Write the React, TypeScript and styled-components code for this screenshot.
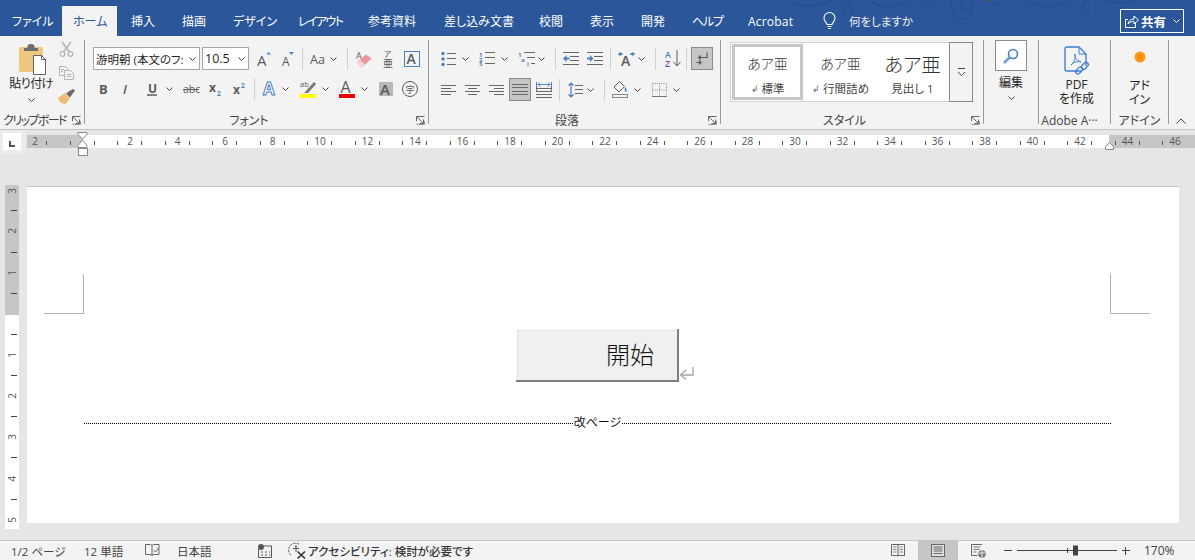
import React from "react";
import styled, { createGlobalStyle } from "styled-components";

const FONT = `"Open Sans", "Noto Sans CJK JP", sans-serif`;

const Global = createGlobalStyle`
  html, body { margin: 0; padding: 0; background: #e6e6e6; }
  #root { width: 1195px; height: 560px; overflow: hidden; }
  * { box-sizing: border-box; }
  svg { display: block; flex: none; overflow: visible; }
  svg text { font-family: ${FONT}; }
`;

const Shell = styled.div`
  width: 1195px; height: 560px; display: flex; flex-direction: column;
  font-family: ${FONT}; font-feature-settings: "palt"; color: #444; overflow: hidden;
`;

/* ---------- title bar ---------- */
const TitleBar = styled.header`
  position: relative; height: 36px; flex: none; background: #2b579a;
  display: flex; align-items: flex-end; color: #fff; font-size: 12px;
`;
const Swirl = styled.svg`position: absolute; top: 0; left: 760px;`;
const Tab = styled.div<{ $w: number; $pl?: number; $ls?: number; $active?: boolean }>`
  position: relative; width: ${p => p.$w}px; height: 30px; padding-left: ${p => p.$pl ?? 14}px;
  display: flex; align-items: center; white-space: nowrap; letter-spacing: ${p => p.$ls ?? 0}px;
  background: ${p => (p.$active ? "#f3f3f3" : "transparent")};
  color: ${p => (p.$active ? "#2b579a" : "#fff")};
`;
const TellMe = styled.div`
  position: relative; height: 30px; margin-left: 14px; display: flex; align-items: center; gap: 13px;
  font-size: 11.5px; color: #f0f0f0; white-space: nowrap;
`;
const ShareButton = styled.div`
  position: relative; margin: 0 11px 3px auto; width: 64px; height: 24px; border: 1px solid #fff;
  display: flex; align-items: center; padding-left: 4px; gap: 2px; font-weight: 700; font-size: 12.5px;
`;

/* ---------- ribbon ---------- */
const Ribbon = styled.section`
  height: 94px; flex: none; display: flex; background: #f3f3f3; border-bottom: 1px solid #c6c6c6;
`;
const Group = styled.div<{ $w: number }>`
  width: ${p => p.$w}px; height: 93px; display: flex; flex-direction: column; flex: none;
`;
const GroupBody = styled.div<{ $pt?: number; $col?: boolean }>`
  height: 75px; padding-top: ${p => p.$pt ?? 0}px; display: flex;
  flex-direction: ${p => (p.$col ? "column" : "row")};
`;
const GroupFooter = styled.div`height: 18px; display: flex; align-items: center;`;
const GroupLabel = styled.div<{ $pad?: number; $ls?: number }>`
  flex: 1; text-align: center; font-size: 12px; white-space: nowrap;
  padding-right: ${p => p.$pad ?? 0}px; letter-spacing: ${p => p.$ls ?? 0}px;
`;
const Launcher = styled.svg`margin: 0 3px 0 3px;`;
const Divider = styled.div`width: 1px; flex: none; margin: 4px 0 5px; background: #9a9a9a;`;
const Row = styled.div<{ $mt?: number }>`
  display: flex; align-items: center; height: 23px; margin-top: ${p => p.$mt ?? 0}px;
`;
const Cell = styled.div<{ $ml?: number }>`
  margin-left: ${p => p.$ml ?? 0}px; display: flex; align-items: center; justify-content: center; flex: none;
`;
const Sep = styled.div<{ $ml: number }>`
  width: 1px; height: 22px; flex: none; background: #d0d0d0; margin-left: ${p => p.$ml}px;
`;
const Toggle = styled.div<{ $ml: number }>`
  width: 22px; height: 23px; margin-left: ${p => p.$ml}px; flex: none; background: #c6c6c6;
  border: 1px solid #8a8a8a; display: flex; align-items: center; justify-content: center;
`;
const Select = styled.div<{ $ml: number; $w: number; $size: number }>`
  width: ${p => p.$w}px; height: 23px; margin-left: ${p => p.$ml}px; background: #fff;
  border: 1px solid #a6a6a6; display: flex; align-items: center; padding: 0 3px 0 2px;
  font-size: ${p => p.$size}px; color: #262626; flex: none; white-space: nowrap; justify-content: space-between;
  font-feature-settings: "normal";
`;
const PasteCol = styled.div`
  width: 55px; display: flex; flex-direction: column; align-items: center; padding: 8px 0 0 11px;
  font-size: 12px; color: #262626; white-space: nowrap;
`;
const PasteLabel = styled.div`margin: 0 0 0 -4px; line-height: 18px; letter-spacing: -.6px;`;
const PasteChevron = styled.div`margin: 5px 0 0 -3px;`;
const SmallCol = styled.div`
  width: 24px; display: flex; flex-direction: column; align-items: center; margin-left: -1px; padding-top: 6px; gap: 9px;
`;
const Gallery = styled.div`
  margin: 6px 0 0 9px; display: flex; height: 60px;
`;
const GalleryBox = styled.div`
  width: 219px; height: 60px; background: #fff; border: 1px solid #d0d0d0; border-right: 0;
  padding: 1px; display: flex; gap: 5px;
`;
const StyleItem = styled.div<{ $w: number; $sel?: boolean }>`
  width: ${p => p.$w}px; height: 56px; flex: none; display: flex; flex-direction: column; align-items: center;
  border: 3px solid ${p => (p.$sel ? "#c6c6c6" : "transparent")};
  background: #fff;
`;
const StylePreview = styled.div<{ $size: number }>`
  height: 33px; display: flex; align-items: center; font-size: ${p => p.$size}px; font-weight: 300;
  color: #333; font-feature-settings: "normal"; white-space: nowrap;
`;
const StyleName = styled.div`
  font-size: 11.5px; line-height: 16px; margin-top: 2px; white-space: nowrap; color: #444;
  display: flex; align-items: center; gap: 3px;
`;
const ParaGlyph = styled.span`font-size: 9px; color: #666;`;
const MoreBox = styled.div`
  width: 24px; height: 60px; border: 1px solid #8a8a8a; display: flex; align-items: center; justify-content: center;
`;
const LargeCol = styled.div<{ $pl?: number }>`
  flex: 1; display: flex; flex-direction: column; align-items: center; padding-left: ${p => p.$pl ?? 0}px;
  font-size: 12px; line-height: 14px; color: #262626;
`;
const SearchBox = styled.div`
  width: 32px; height: 31px; margin-top: 4px; background: #fff; border: 1px solid #8a8a8a;
  display: flex; align-items: center; justify-content: center;
`;
const LargeLabel = styled.div<{ $mt: number }>`margin-top: ${p => p.$mt}px; white-space: nowrap; text-align: center;`;
const ChevronWrap = styled.div<{ $mt: number }>`margin-top: ${p => p.$mt}px;`;
const Collapse = styled.div`
  flex: 1; display: flex; align-items: flex-end; justify-content: flex-end; padding: 0 9px 5px 0; height: 93px;
`;

/* ---------- workspace ---------- */
const Workspace = styled.main`
  flex: 1; background: #e6e6e6; display: flex; flex-direction: column; min-height: 0;
`;
const RulerBar = styled.div`height: 56px; flex: none; display: flex;`;
const TabSelector = styled.div`
  width: 26px; height: 24px; background: #ebebeb; padding: 3px 5px 4px 3px; margin-right: 1px;
`;
const TabBox = styled.div`
  width: 18px; height: 17px; background: #fff; padding: 8px 0 0 6px;
`;
const TabGlyph = styled.div`
  width: 6px; height: 6px; border-left: 2px solid #555; border-bottom: 2px solid #555;
`;
const CanvasRow = styled.div`flex: 1; display: flex; min-height: 0;`;
const VRulerWrap = styled.div`margin: -1px 8px 0 5px; width: 14px;`;
const Page = styled.div`
  width: 1152px; height: 337px; background: #fff; border-top: 1px solid #c6c6c6;
  display: flex; flex-direction: column;
`;
const CropRow = styled.div`
  margin-top: 87px; height: 40px; display: flex; justify-content: space-between; padding: 0 29px 0 17px;
`;
const CropMark = styled.div<{ $right?: boolean }>`
  width: 40px; height: 40px; border-bottom: 1px solid #b0b0b0;
  ${p => (p.$right ? "border-left: 1px solid #b0b0b0;" : "border-right: 1px solid #b0b0b0;")}
`;
const FieldRow = styled.div`
  margin: 15px 0 0 489px; display: flex; align-items: flex-end;
`;
const FieldOuter = styled.div`
  width: 163px; height: 53px; padding: 1px 0 0 1px;
  border-right: 2px solid #7f7f7f; border-bottom: 2px solid #7f7f7f;
`;
const FieldFace = styled.div`
  width: 100%; height: 100%; background: #f0f0f0; border-top: 1px solid #e0e0e0; border-left: 1px solid #e0e0e0;
  display: flex; align-items: center; justify-content: flex-end; padding: 0 23px 4px 0;
  font-size: 24px; color: #111; font-weight: 300; font-feature-settings: "normal";
`;
const ReturnMark = styled.div`margin: 0 0 2px 0;`;
const BreakRow = styled.div`
  margin: 34px 0 0 57px; width: 1027px; height: 14px; display: flex; align-items: center;
`;
const BreakLine = styled.div`flex: 1; border-top: 1px dotted #000;`;
const BreakLabel = styled.div`padding: 0 1px; font-size: 12px; color: #111; white-space: nowrap; line-height: 14px;`;

/* ---------- status bar ---------- */
const StatusBar = styled.footer`
  height: 20px; flex: none; background: #f3f3f3; border-top: 1px solid #c6c6c6;
  display: flex; align-items: stretch; font-size: 11.5px; color: #444;
`;
const StatusCell = styled.div<{ $w: number; $pl?: number; $bold?: boolean }>`
  width: ${p => p.$w}px; padding-left: ${p => p.$pl ?? 0}px; display: flex; align-items: center; flex: none;
  white-space: nowrap; font-weight: ${p => (p.$bold ? 500 : 400)}; color: ${p => (p.$bold ? "#333" : "#444")};
`;
const StatusRight = styled.div`margin-left: auto; display: flex; align-items: center; padding-right: 18px;`;
const ViewButton = styled.div<{ $active?: boolean }>`
  width: 40px; height: 19px; display: flex; align-items: center; justify-content: center;
  background: ${p => (p.$active ? "#c6c6c6" : "transparent")};
`;
const ZoomText = styled.div`margin-left: 14px; font-size: 12px; width: 33px;`;

/* ---------- icons ---------- */
type IcP = { w: number; h: number; children?: React.ReactNode };
const Ic = ({ w, h, children }: IcP) => (
  <svg width={w} height={h} viewBox={`0 0 ${w} ${h}`} fill="none">{children}</svg>
);
const G = "#5b5b5b";
const B = "#4a80bd";

const Chev = () => <Ic w={7} h={4}><path d="M.5.5l3 3 3-3" stroke="#444" /></Ic>;

const Paste = () => (
  <Ic w={28} h={31}>
    <rect x="0" y="3" width="24" height="25" rx="1.5" fill="#f0c77e" />
    <path d="M5 7V4h3.5V2.5a3.5 2.5 0 0 1 7 0V4H19v3z" fill="#6d6d6d" />
    <path d="M14.5 11.5h8l4 4v15h-12z" fill="#fff" stroke="#666" />
    <path d="M22.5 11.5v4h4" stroke="#666" />
  </Ic>
);
const Scissors = () => (
  <Ic w={15} h={15}>
    <path d="M3 0l7.5 10M12 0L4.5 10" stroke="#b5b5b5" strokeWidth="1.6" />
    <circle cx="3.5" cy="12" r="2.4" stroke="#b5b5b5" strokeWidth="1.2" />
    <circle cx="11.5" cy="12" r="2.4" stroke="#b5b5b5" strokeWidth="1.2" />
  </Ic>
);
const Copy = () => (
  <Ic w={15} h={14}>
    <path d="M.5.5h6l2 2v7h-8z" fill="#f3f3f3" stroke="#b5b5b5" />
    <path d="M5.5 4.5h6l3 3v6h-9z" fill="#f3f3f3" stroke="#b5b5b5" />
    <path d="M7.5 8.5h5M7.5 10.5h5M2 3.5h3M2 5.5h2" stroke="#b5b5b5" />
  </Ic>
);
const Painter = () => (
  <Ic w={17} h={15}>
    <path d="M0 9l7-5 5 5.500-4.500 5.500C4 15 1.500 13 0 9z" fill="#ecbd72" />
    <path d="M8 4.500l5-3.500 2.500 2.500L12 8.500z" fill="#6a6a6a" />
    <circle cx="15" cy="1.800" r="1.700" fill="#6a6a6a" />
  </Ic>
);
const AGrow = () => (
  <Ic w={14} h={16}>
    <text x="0" y="15" fontSize="15" fill={G}>A</text>
    <path d="M9.500 3.500L11.500 1l2.500 2.500z" fill={B} />
  </Ic>
);
const AShrink = () => (
  <Ic w={12} h={14}>
    <text x="0" y="13.500" fontSize="12" fill={G}>A</text>
    <path d="M7 0h5L9.500 3z" fill={B} />
  </Ic>
);
const CaseIcon = () => <Ic w={16} h={13}><text x="0" y="11.500" fontSize="12.500" fill={G}>Aa</text></Ic>;
const Eraser = () => (
  <Ic w={16} h={16}>
    <text x="0" y="8" fontSize="9" fill={G}>A</text>
    <path d="M1 11l9-7.500 5.500 4-8.500 8H4z" fill="#f0949c" />
    <path d="M1 11l3 4.500H7l2-2L4.500 9z" fill="#f8d2d5" />
  </Ic>
);
const Furigana = () => (
  <Ic w={12} h={17}>
    <text x="1" y="6.500" fontSize="7.500" fill={G}>ア</text>
    <text x="0" y="16.500" fontSize="10" fill={G}>亜</text>
  </Ic>
);
const ABox = () => (
  <Ic w={16} h={16}>
    <rect x=".5" y=".5" width="15" height="15" stroke="#4a80bd" />
    <text x="2.500" y="13" fontSize="14" fontWeight="600" fill={G}>A</text>
  </Ic>
);
const Letter = ({ c, w, style, weight }: { c: string; w: number; style?: string; weight?: number }) => (
  <Ic w={w} h={14}>
    <text x="1" y="12" fontSize="13" fontStyle={style} fontWeight={weight ?? 700} fill={G}>{c}</text>
  </Ic>
);
const Under = () => (
  <Ic w={11} h={15}>
    <text x="1" y="11.500" fontSize="12" fontWeight="700" fill={G}>U</text>
    <path d="M0 14h10" stroke={G} strokeWidth="1.500" />
  </Ic>
);
const Strike = () => (
  <Ic w={16} h={12}>
    <text x="0" y="10" fontSize="10.500" fill={G}>abc</text>
    <path d="M0 6.500h16" stroke={G} />
  </Ic>
);
const Sub = () => (
  <Ic w={13} h={14}>
    <text x="0" y="10" fontSize="12" fontWeight="700" fill={G}>x</text>
    <text x="8" y="13.500" fontSize="6.500" fontWeight="700" fill={B}>2</text>
  </Ic>
);
const Sup = () => (
  <Ic w={13} h={14}>
    <text x="0" y="12" fontSize="12" fontWeight="700" fill={G}>x</text>
    <text x="8" y="6" fontSize="6.500" fontWeight="700" fill={B}>2</text>
  </Ic>
);
const Glow = () => (
  <Ic w={15} h={16}>
    <text x="0" y="14" fontSize="17" fontWeight="700" fill="#fff" stroke="#4a80bd" strokeWidth="1">A</text>
  </Ic>
);
const Highlight = () => (
  <Ic w={16} h={18}>
    <text x="0" y="7" fontSize="7.500" fill={G}>ab</text>
    <path d="M5 12L14 2l2 2-8 9H4z" fill="#777" />
    <rect y="14" width="16" height="4" fill="#ffff00" />
  </Ic>
);
const ARed = () => (
  <Ic w={16} h={18}>
    <text x="1.500" y="12.500" fontSize="16" fill={G}>A</text>
    <rect y="14" width="16" height="4" fill="#e80000" />
  </Ic>
);
const AGray = () => (
  <Ic w={14} h={14}>
    <rect width="14" height="14" fill="#b8b8b8" />
    <text x="1" y="12.500" fontSize="15" fontWeight="600" fill={G}>A</text>
  </Ic>
);
const Enclosed = () => (
  <Ic w={16} h={16}>
    <circle cx="8" cy="8" r="7.500" stroke={G} />
    <text x="3.500" y="12" fontSize="9" fill={G}>字</text>
  </Ic>
);
const Lines = ({ x1, x2, ys }: { x1: number[] | number; x2: number[] | number; ys: number[] }) => (
  <>
    {ys.map((y, i) => (
      <path key={y} d={`M${Array.isArray(x1) ? x1[i] : x1} ${y + .5}H${Array.isArray(x2) ? x2[i] : x2}`} stroke="#666" />
    ))}
  </>
);
const Bullets = () => (
  <Ic w={15} h={14}>
    {[1.500, 7, 12.500].map(y => <circle key={y} cx="2" cy={y} r="1.700" fill={B} />)}
    <Lines x1={6} x2={15} ys={[1, 6, 12]} />
  </Ic>
);
const Numbers = () => (
  <Ic w={16} h={15}>
    {[5.500, 10.500, 15].map((y, i) => <text key={y} x="0" y={y} fontSize="6" fontWeight="700" fill={B}>{i + 1}</text>)}
    <Lines x1={6} x2={16} ys={[1, 6, 12]} />
  </Ic>
);
const Multi = () => (
  <Ic w={17} h={15}>
    <text x="0" y="5.500" fontSize="6" fontWeight="700" fill={B}>1</text>
    <text x="3" y="10.500" fontSize="6" fontWeight="700" fill={B}>a</text>
    <text x="9" y="15" fontSize="6" fontWeight="700" fill={B}>i</text>
    <Lines x1={[6, 9, 13]} x2={17} ys={[1, 6, 12]} />
  </Ic>
);
const Indent = ({ inc }: { inc?: boolean }) => (
  <Ic w={16} h={13}>
    <Lines x1={[0, 7, 7, 0]} x2={16} ys={[0, 4, 8, 12]} />
    {inc
      ? <path d="M0 5.500h3V3l3.500 3.500L3 10V7.500H0z" fill={B} />
      : <path d="M6.500 5.500h-3V3L0 6.500 3.500 10V7.500h3z" fill={B} />}
  </Ic>
);
const Phonetic = () => (
  <Ic w={17} h={15}>
    <text x="3" y="15" fontSize="14" fontWeight="600" fill={G}>A</text>
    <path d="M0 3l2.500-2.500v1.500h2v2h-2v1.500zM17 3L14.500.500v1.500h-2v2h2v1.500z" fill={B} />
  </Ic>
);
const Sort = () => (
  <Ic w={16} h={17}>
    <text x="0" y="7.500" fontSize="9" fontWeight="600" fill={B}>A</text>
    <text x="0" y="16.500" fontSize="9" fontWeight="600" fill="#7c4ca0">Z</text>
    <path d="M12 0v15M8.500 12l3.500 4 3.500-4" stroke={G} />
  </Ic>
);
const ParaMark = () => (
  <Ic w={12} h={14}>
    <path d="M11 .5v5H2.500M5 3.500l-2.500 2 2.500 2" stroke={G} strokeWidth="1.200" />
    <path d="M.5 10.500h4M3 8.500l2 2-2 2" stroke={G} strokeWidth="1.200" />
  </Ic>
);
const Align = ({ kind }: { kind: "l" | "c" | "r" }) => {
  const s = kind === "l" ? [0, 0, 0, 0] : kind === "c" ? [0, 3, 0, 3] : [0, 5, 0, 5];
  const e = kind === "l" ? [15, 10, 15, 10] : kind === "c" ? [15, 12, 15, 12] : [15, 15, 15, 15];
  return <Ic w={15} h={10}><Lines x1={s} x2={e} ys={[0, 3, 6, 9]} /></Ic>;
};
const Justify = () => <Ic w={16} h={11}><Lines x1={0} x2={16} ys={[0, 3, 7, 10]} /></Ic>;
const Distribute = () => (
  <Ic w={16} h={16}>
    <path d="M.5 0v10M15.500 0v10M2 2.500h12" stroke={B} />
    <path d="M4 .5L2 2.500l2 2M12 .5l2 2-2 2" stroke={B} />
    <Lines x1={0} x2={16} ys={[6, 9, 12, 15]} />
  </Ic>
);
const LineSpacing = () => (
  <Ic w={15} h={16}>
    <path d="M3 1v14M.5 3.500L3 1l2.500 2.500M.5 12.500L3 15l2.500-2.500" stroke={B} strokeWidth="1.200" />
    <Lines x1={7} x2={15} ys={[3, 7, 11]} />
  </Ic>
);
const Fill = () => (
  <Ic w={16} h={17}>
    <path d="M7.500.5L2 6l5 5 5.500-5.500z" fill="#f3f3f3" stroke={G} />
    <path d="M13 6c1.500 2 2.500 3.500 1.500 4.500S12 10 13 6z" fill={B} />
    <rect x=".5" y="13.500" width="15" height="3" fill="#f3f3f3" stroke="#888" />
  </Ic>
);
const Borders = () => (
  <Ic w={15} h={14}>
    <path d="M.5.500h14v13M.5.500v13M7.500.500v13M.5 7h14" stroke="#8c8c8c" strokeDasharray="1 1.200" />
    <path d="M0 13.500h15" stroke="#777" />
  </Ic>
);
const Gallery3 = () => (
  <Ic w={9} h={8}>
    <path d="M1 .5h7" stroke="#444" />
    <path d="M1 4l3.500 3.500L8 4" stroke="#444" />
  </Ic>
);
const Search = () => (
  <Ic w={16} h={16}>
    <circle cx="10" cy="6" r="4.500" fill="#fff" stroke={B} strokeWidth="1.600" />
    <path d="M6.500 9.500L1 15" stroke="#6f9bcf" strokeWidth="2.500" />
  </Ic>
);
const Pdf = () => (
  <Ic w={26} h={30}>
    <path d="M1 3a2 2 0 0 1 2-2h12l7 7v12M17 25H3a2 2 0 0 1-2-2V3" stroke="#3f7fd6" strokeWidth="1.400" />
    <path d="M15 1v7h7" stroke="#3f7fd6" />
    <path d="M7 19c3-2 5-7 4-11-1 3 2 7 6 8-4-1-7 0-10 3z" stroke="#3f7fd6" />
    <rect x="11.500" y="22.500" width="8" height="4.500" rx="2.200" transform="rotate(-45 15 25)" stroke="#3f7fd6" strokeWidth="1.300" />
    <rect x="17" y="17.500" width="8" height="4.500" rx="2.200" transform="rotate(-45 21 20)" stroke="#3f7fd6" strokeWidth="1.300" />
  </Ic>
);
const Dot = () => (
  <Ic w={12} h={12}>
    <circle cx="6" cy="6" r="5.500" fill="#ff9b1a" />
    <circle cx="6" cy="6" r="3" fill="#ff8a00" />
  </Ic>
);
const Bulb = () => (
  <Ic w={13} h={18}>
    <path d="M4 12.500C3.500 10.500 1 9.500 1 6a5.500 5.500 0 0 1 11 0c0 3.500-2.500 4.500-3 6.500z" stroke="#fff" strokeWidth="1.100" />
    <path d="M4.500 14.500h4M5 16.500h3" stroke="#fff" strokeWidth="1.100" />
  </Ic>
);
const Share = () => (
  <Ic w={14} h={14}>
    <path d="M3 5.500H.5v8h10V9" stroke="#fff" />
    <path d="M3 10c.5-3 3-5 6-5V2l4.500 4L9 10V7.500C7 7.500 4.500 8 3 10z" stroke="#fff" />
  </Ic>
);
const WhiteChev = () => <Ic w={7} h={4}><path d="M.5.500l3 3 3-3" stroke="#fff" /></Ic>;
const UpChev = () => <Ic w={10} h={6}><path d="M.5 5.500L5 1l4.500 4.500" stroke="#444" /></Ic>;
const LauncherIcon = () => (
  <Launcher width="9" height="9" viewBox="0 0 9 9" fill="none">
    <path d="M.5 5V.5H8.500M1 1l6 6M3.500 7.500h4v-4" stroke="#666" />
    <path d="M.5 8.500H8.500V5" stroke="#999" />
  </Launcher>
);
const ReturnIcon = () => (
  <Ic w={15} h={13}>
    <path d="M14 0v8H2M7 3L1.500 8 7 12.500" stroke="#a5a5a5" strokeWidth="1.300" />
  </Ic>
);
const BookCheck = () => (
  <Ic w={14} h={13}>
    <path d="M.5.500h5l1.500 1 1.500-1h5.500v10H8l-1 1.500-1-1.500H.5zM7 1.500v10" stroke="#666" />
    <path d="M8.500 6l2 2 3-4" stroke="#666" fill="#f3f3f3" />
  </Ic>
);
const Macro = () => (
  <Ic w={14} h={14}>
    <circle cx="3" cy="3" r="3" fill="#555" />
    <path d="M.5 5v8.500h13V2H6" stroke="#555" />
    <path d="M3 8h2M7 8h2M11 8h1M3 11h2M7 11h2M11 11h1" stroke="#555" />
  </Ic>
);
const A11y = () => (
  <Ic w={17} h={16}>
    <path d="M10 1.200A6.500 6.500 0 1 0 3 13" stroke="#666" strokeDasharray="2.500 1" />
    <circle cx="7" cy="3.500" r="1.100" fill="#555" />
    <path d="M4 5.500h6M7 5.500v3.500" stroke="#555" />
    <path d="M8.500 8.500L16 15.500M16 8.500l-7.500 7" stroke="#333" strokeWidth="1.600" />
  </Ic>
);
const ReadMode = () => (
  <Ic w={14} h={13}>
    <path d="M.5.500h13v11h-13zM7 .5v12" stroke="#666" />
    <path d="M2 3h3.500M2 5.500h3.500M2 8h3.500M8.500 3H12M8.500 5.500H12M8.500 8H12" stroke="#888" />
  </Ic>
);
const PrintMode = () => (
  <Ic w={14} h={13}>
    <rect x=".5" y=".5" width="13" height="12" stroke="#666" fill="#e0e0e0" />
    <path d="M2.500 3h9M2.500 5h9M2.500 7h9M2.500 9.500h9" stroke="#666" />
  </Ic>
);
const WebMode = () => (
  <Ic w={15} h={14}>
    <path d="M11 .5H.5v11h6" stroke="#666" />
    <path d="M2.500 3h7M2.500 5.500h6M2.500 8h3" stroke="#777" />
    <circle cx="11" cy="10" r="3.800" fill="#777" />
    <path d="M8 9h6M11 6.500v7" stroke="#f3f3f3" />
  </Ic>
);
const ZoomSlider = () => (
  <Ic w={100} h={11}>
    <path d="M0 5.500h100M50.500 3v5" stroke="#444" />
    <rect x="56" y=".5" width="5" height="10" fill="#444" />
  </Ic>
);
const Minus = () => <Ic w={8} h={2}><path d="M0 .5h8" stroke="#444" /></Ic>;
const Plus = () => <Ic w={8} h={8}><path d="M0 3.500h8M3.500 0v8" stroke="#444" /></Ic>;

/* ---------- rulers ---------- */
const HRuler = () => {
  const origin = 27;
  const hy = 5;
  const nums = [-2, ...Array.from({ length: 23 }, (_, i) => (i + 1) * 2)];
  const ticks = Array.from({ length: 48 }, (_, i) => i - 2);
  return (
    <svg width={1168} height={28} viewBox="0 0 1168 28">
      <rect x="0" y={hy} width="1168" height="13" fill="#c6c6c6" />
      <rect x={83 - origin} y={hy} width={1109 - 83} height="13" fill="#fff" />
      {nums.map(n => (
        <text key={n} x={82.5 + 23.75 * n - origin} y={hy + 10} fontSize="10" fill="#555" textAnchor="middle">{Math.abs(n)}</text>
      ))}
      {ticks.map(k => (
        <path key={k} d={`M${Math.round(93.5 + 23.75 * k - origin) + .5} ${hy + 6}v4`} stroke="#555" />
      ))}
      <path d="M51 2.500h9v2L55.500 9 51 4.500zM51 17.500v-2L55.500 10l4.500 5.500v2z" fill="#fff" stroke="#8a8a8a" />
      <rect x="51.500" y="18.500" width="9" height="7" fill="#fff" stroke="#8a8a8a" />
      <path d="M1078.500 19.500v-3l4-4 4 4v3z" fill="#fff" stroke="#8a8a8a" />
    </svg>
  );
};
const VRuler = () => {
  const labels: [number, number][] = [[3, 6], [2, 46], [1, 88], [1, 170], [2, 211], [3, 252], [4, 294], [5, 335]];
  const ticks = [25, 67, 108, 149, 190, 231, 272, 314];
  return (
    <svg width={14} height={344} viewBox="0 0 14 344">
      <rect width="14" height="130" fill="#c6c6c6" />
      <rect y="130" width="14" height="214" fill="#fff" />
      {labels.map(([n, y]) => (
        <text key={`${n}-${y}`} x="7" y={y} fontSize="10" fill="#555" textAnchor="middle" dominantBaseline="central" transform={`rotate(-90 7 ${y})`}>{n}</text>
      ))}
      {ticks.map(y => <path key={y} d={`M6 ${y + .5}h6`} stroke="#444" />)}
    </svg>
  );
};

const TABS: [string, number, number][] = [
  ["挿入", 51, 0], ["描画", 51, 0], ["デザイン", 65, 0], ["レイアウト", 70, -1.6], ["参考資料", 76, 0],
  ["差し込み文書", 95, 0], ["校閲", 51, 0], ["表示", 51, 0], ["開発", 51, 0], ["ヘルプ", 56, -1.2], ["Acrobat", 75, .2],
];

export default function App() {
  return (
    <Shell>
      <Global />
      <TitleBar>
        <Swirl width="435" height="36" viewBox="0 0 435 36" fill="none" stroke="#264e8c" strokeWidth="1.200">
          <path d="M30 0c10 8 30 8 42 0M92 0c-8 6-10 12-5 14s7-6 3-10M110 0c10 9 26 9 38 0M162 7c4-5 8-4 10-7" />
          <path d="M192 0c-4 10 4 20 13 19s7-9 1-10M205 0c-8 3-6 12 2 12s8-8 4-12M232 2c4 4 10 3 12 0" />
          <path d="M268 0c10 9 26 9 40 0M326 0c-6 8-4 16 0 14s4-10 0-12M346 0c10 4 20 4 30 0" />
          <rect x="225" y="0" width="6" height="1" fill="#555" stroke="none" />
        </Swirl>
        <Tab $w={62} $pl={12}>ファイル</Tab>
        <Tab $w={55} $pl={11} $active>ホーム</Tab>
        {TABS.map(([t, w, ls]) => <Tab key={t} $w={w} $ls={ls}>{t}</Tab>)}
        <TellMe>
          <Bulb />
          何をしますか
        </TellMe>
        <ShareButton>
          <Share />
          共有
          <Cell $ml={5}><WhiteChev /></Cell>
        </ShareButton>
      </TitleBar>

      <Ribbon>
        <Group $w={84}>
          <GroupBody>
            <PasteCol>
              <Paste />
              <PasteLabel>貼り付け</PasteLabel>
              <PasteChevron><Chev /></PasteChevron>
            </PasteCol>
            <SmallCol>
              <Scissors />
              <Copy />
              <Painter />
            </SmallCol>
          </GroupBody>
          <GroupFooter>
            <GroupLabel $ls={-1.6}>クリップボード</GroupLabel>
            <LauncherIcon />
          </GroupFooter>
        </Group>
        <Divider />

        <Group $w={343}>
          <GroupBody $pt={11} $col>
            <Row>
              <Select $ml={8} $w={107} $size={11.5}>游明朝 (本文のフ:<Chev /></Select>
              <Select $ml={2} $w={47} $size={12.5}>10.5<Chev /></Select>
              <Cell $ml={8}><AGrow /></Cell>
              <Cell $ml={11}><AShrink /></Cell>
              <Sep $ml={8} />
              <Cell $ml={7}><CaseIcon /></Cell>
              <Cell $ml={4}><Chev /></Cell>
              <Sep $ml={10} />
              <Cell $ml={8}><Eraser /></Cell>
              <Cell $ml={11}><Furigana /></Cell>
              <Cell $ml={9}><ABox /></Cell>
            </Row>
            <Row $mt={7}>
              <Cell $ml={13}><Letter c="B" w={10} /></Cell>
              <Cell $ml={14}><Letter c="I" w={10} style="italic" weight={600} /></Cell>
              <Cell $ml={15}><Under /></Cell>
              <Cell $ml={8}><Chev /></Cell>
              <Cell $ml={10}><Strike /></Cell>
              <Cell $ml={10}><Sub /></Cell>
              <Cell $ml={11}><Sup /></Cell>
              <Sep $ml={8} />
              <Cell $ml={8}><Glow /></Cell>
              <Cell $ml={4}><Chev /></Cell>
              <Cell $ml={11}><Highlight /></Cell>
              <Cell $ml={6}><Chev /></Cell>
              <Cell $ml={10}><ARed /></Cell>
              <Cell $ml={6}><Chev /></Cell>
              <Cell $ml={11}><AGray /></Cell>
              <Cell $ml={9}><Enclosed /></Cell>
            </Row>
          </GroupBody>
          <GroupFooter>
            <GroupLabel>フォント</GroupLabel>
            <LauncherIcon />
          </GroupFooter>
        </Group>
        <Divider />

        <Group $w={291}>
          <GroupBody $pt={11} $col>
            <Row>
              <Cell $ml={12}><Bullets /></Cell>
              <Cell $ml={6}><Chev /></Cell>
              <Cell $ml={10}><Numbers /></Cell>
              <Cell $ml={6}><Chev /></Cell>
              <Cell $ml={10}><Multi /></Cell>
              <Cell $ml={3}><Chev /></Cell>
              <Sep $ml={10} />
              <Cell $ml={7}><Indent /></Cell>
              <Cell $ml={8}><Indent inc /></Cell>
              <Sep $ml={7} />
              <Cell $ml={7}><Phonetic /></Cell>
              <Cell $ml={3}><Chev /></Cell>
              <Sep $ml={10} />
              <Cell $ml={9}><Sort /></Cell>
              <Sep $ml={5} />
              <Toggle $ml={4}><ParaMark /></Toggle>
            </Row>
            <Row $mt={8}>
              <Cell $ml={12}><Align kind="l" /></Cell>
              <Cell $ml={9}><Align kind="c" /></Cell>
              <Cell $ml={9}><Align kind="r" /></Cell>
              <Toggle $ml={5}><Justify /></Toggle>
              <Cell $ml={5}><Distribute /></Cell>
              <Sep $ml={7} />
              <Cell $ml={8}><LineSpacing /></Cell>
              <Cell $ml={4}><Chev /></Cell>
              <Sep $ml={10} />
              <Cell $ml={7}><Fill /></Cell>
              <Cell $ml={6}><Chev /></Cell>
              <Cell $ml={11}><Borders /></Cell>
              <Cell $ml={6}><Chev /></Cell>
            </Row>
          </GroupBody>
          <GroupFooter>
            <GroupLabel>段落</GroupLabel>
            <LauncherIcon />
          </GroupFooter>
        </Group>
        <Divider />

        <Group $w={262}>
          <GroupBody>
            <Gallery>
              <GalleryBox>
                <StyleItem $w={71} $sel>
                  <StylePreview $size={14}>あア亜</StylePreview>
                  <StyleName><ParaGlyph>↲</ParaGlyph>標準</StyleName>
                </StyleItem>
                <StyleItem $w={65}>
                  <StylePreview $size={14}>あア亜</StylePreview>
                  <StyleName><ParaGlyph>↲</ParaGlyph>行間詰め</StyleName>
                </StyleItem>
                <StyleItem $w={69}>
                  <StylePreview $size={19.5}>あア亜</StylePreview>
                  <StyleName>見出し 1</StyleName>
                </StyleItem>
              </GalleryBox>
              <MoreBox><Gallery3 /></MoreBox>
            </Gallery>
          </GroupBody>
          <GroupFooter>
            <GroupLabel>スタイル</GroupLabel>
            <LauncherIcon />
          </GroupFooter>
        </Group>
        <Divider />

        <Group $w={54}>
          <GroupBody>
            <LargeCol>
              <SearchBox><Search /></SearchBox>
              <LargeLabel $mt={5}>編集</LargeLabel>
              <ChevronWrap $mt={6}><Chev /></ChevronWrap>
            </LargeCol>
          </GroupBody>
          <GroupFooter />
        </Group>
        <Divider />

        <Group $w={71}>
          <GroupBody>
            <LargeCol $pl={4}>
              <ChevronWrap $mt={10}><Pdf /></ChevronWrap>
              <LargeLabel $mt={2}>PDF<br />を作成</LargeLabel>
            </LargeCol>
          </GroupBody>
          <GroupFooter>
            <GroupLabel $pad={10}>Adobe A···</GroupLabel>
          </GroupFooter>
        </Group>
        <Divider />

        <Group $w={57}>
          <GroupBody>
            <LargeCol>
              <ChevronWrap $mt={15}><Dot /></ChevronWrap>
              <LargeLabel $mt={16}>アド<br />イン</LargeLabel>
            </LargeCol>
          </GroupBody>
          <GroupFooter>
            <GroupLabel>アドイン</GroupLabel>
          </GroupFooter>
        </Group>
        <Divider />
        <Collapse><UpChev /></Collapse>
      </Ribbon>

      <Workspace>
        <RulerBar>
          <TabSelector><TabBox><TabGlyph /></TabBox></TabSelector>
          <HRuler />
        </RulerBar>
        <CanvasRow>
          <VRulerWrap><VRuler /></VRulerWrap>
          <Page>
            <CropRow>
              <CropMark />
              <CropMark $right />
            </CropRow>
            <FieldRow>
              <FieldOuter><FieldFace>開始</FieldFace></FieldOuter>
              <ReturnMark><ReturnIcon /></ReturnMark>
            </FieldRow>
            <BreakRow>
              <BreakLine />
              <BreakLabel>改ページ</BreakLabel>
              <BreakLine />
            </BreakRow>
          </Page>
        </CanvasRow>
      </Workspace>

      <StatusBar>
        <StatusCell $w={84} $pl={11}>1/2 ページ</StatusCell>
        <StatusCell $w={61}>12 単語</StatusCell>
        <StatusCell $w={32}><BookCheck /></StatusCell>
        <StatusCell $w={81}>日本語</StatusCell>
        <StatusCell $w={31}><Macro /></StatusCell>
        <StatusCell $w={19}><A11y /></StatusCell>
        <StatusCell $w={200} $bold>アクセシビリティ: 検討が必要です</StatusCell>
        <StatusRight>
          <ViewButton><ReadMode /></ViewButton>
          <ViewButton $active><PrintMode /></ViewButton>
          <ViewButton><WebMode /></ViewButton>
          <Cell $ml={6}><Minus /></Cell>
          <Cell $ml={5}><ZoomSlider /></Cell>
          <Cell $ml={5}><Plus /></Cell>
          <ZoomText>170%</ZoomText>
        </StatusRight>
      </StatusBar>
    </Shell>
  );
}
